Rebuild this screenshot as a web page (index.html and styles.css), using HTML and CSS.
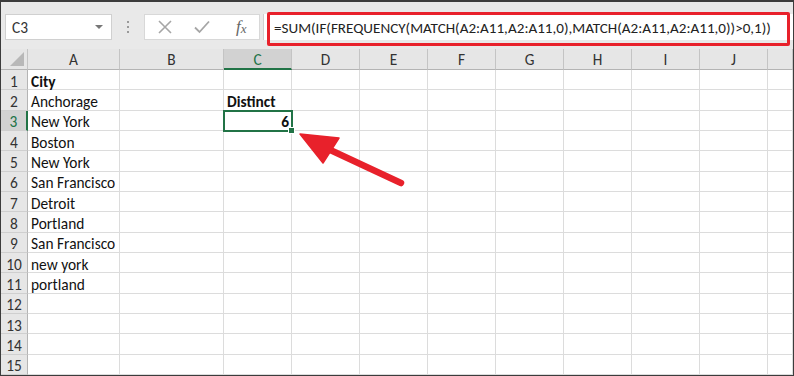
FILE: index.html
```html
<!DOCTYPE html>
<html lang="en">
<head>
  <meta charset="UTF-8">
  <title>Distinct count</title>
  <link rel="stylesheet" href="styles.css">
</head>
<body>
  <div class="app">
    <div class="toolbar">
      <div class="namebox">
        <span>C3</span>
        <span class="caret"></span>
      </div>
      <div class="grip"><i></i><i></i><i></i></div>
      <div class="fbtns">
        <svg width="14" height="14" viewBox="0 0 14 14"><path d="M1 1L13 13M13 1L1 13" stroke="#a6a6a6" stroke-width="1.6" fill="none"/></svg>
        <svg width="16" height="14" viewBox="0 0 16 14"><path d="M1 7.5L5.5 12L15 1.5" stroke="#a6a6a6" stroke-width="1.8" fill="none"/></svg>
        <span class="fx">f<sub>x</sub></span>
      </div>
      <div class="formula">=SUM(IF(FREQUENCY(MATCH(A2:A11,A2:A11,0),MATCH(A2:A11,A2:A11,0))&gt;0,1))</div>
    </div>

    <div class="sheet">
      <div class="hd corner"></div>
      <div class="hd">A</div><div class="hd">B</div><div class="hd on">C</div><div class="hd">D</div><div class="hd">E</div><div class="hd">F</div><div class="hd">G</div><div class="hd">H</div><div class="hd">I</div><div class="hd">J</div><div class="hd"></div>

      <div class="rh">1</div><div class="c b">City</div><div class="c"></div><div class="c"></div><div class="c"></div><div class="c"></div><div class="c"></div><div class="c"></div><div class="c"></div><div class="c"></div><div class="c"></div><div class="c"></div>
      <div class="rh">2</div><div class="c">Anchorage</div><div class="c"></div><div class="c b">Distinct</div><div class="c"></div><div class="c"></div><div class="c"></div><div class="c"></div><div class="c"></div><div class="c"></div><div class="c"></div><div class="c"></div>
      <div class="rh on">3</div><div class="c">New York</div><div class="c"></div><div class="c b num sel">6</div><div class="c"></div><div class="c"></div><div class="c"></div><div class="c"></div><div class="c"></div><div class="c"></div><div class="c"></div><div class="c"></div>
      <div class="rh">4</div><div class="c">Boston</div><div class="c"></div><div class="c"></div><div class="c"></div><div class="c"></div><div class="c"></div><div class="c"></div><div class="c"></div><div class="c"></div><div class="c"></div><div class="c"></div>
      <div class="rh">5</div><div class="c">New York</div><div class="c"></div><div class="c"></div><div class="c"></div><div class="c"></div><div class="c"></div><div class="c"></div><div class="c"></div><div class="c"></div><div class="c"></div><div class="c"></div>
      <div class="rh">6</div><div class="c">San Francisco</div><div class="c"></div><div class="c"></div><div class="c"></div><div class="c"></div><div class="c"></div><div class="c"></div><div class="c"></div><div class="c"></div><div class="c"></div><div class="c"></div>
      <div class="rh">7</div><div class="c">Detroit</div><div class="c"></div><div class="c"></div><div class="c"></div><div class="c"></div><div class="c"></div><div class="c"></div><div class="c"></div><div class="c"></div><div class="c"></div><div class="c"></div>
      <div class="rh">8</div><div class="c">Portland</div><div class="c"></div><div class="c"></div><div class="c"></div><div class="c"></div><div class="c"></div><div class="c"></div><div class="c"></div><div class="c"></div><div class="c"></div><div class="c"></div>
      <div class="rh">9</div><div class="c">San Francisco</div><div class="c"></div><div class="c"></div><div class="c"></div><div class="c"></div><div class="c"></div><div class="c"></div><div class="c"></div><div class="c"></div><div class="c"></div><div class="c"></div>
      <div class="rh">10</div><div class="c">new york</div><div class="c"></div><div class="c"></div><div class="c"></div><div class="c"></div><div class="c"></div><div class="c"></div><div class="c"></div><div class="c"></div><div class="c"></div><div class="c"></div>
      <div class="rh">11</div><div class="c">portland</div><div class="c"></div><div class="c"></div><div class="c"></div><div class="c"></div><div class="c"></div><div class="c"></div><div class="c"></div><div class="c"></div><div class="c"></div><div class="c"></div>
      <div class="rh">12</div><div class="c"></div><div class="c"></div><div class="c"></div><div class="c"></div><div class="c"></div><div class="c"></div><div class="c"></div><div class="c"></div><div class="c"></div><div class="c"></div><div class="c"></div>
      <div class="rh">13</div><div class="c"></div><div class="c"></div><div class="c"></div><div class="c"></div><div class="c"></div><div class="c"></div><div class="c"></div><div class="c"></div><div class="c"></div><div class="c"></div><div class="c"></div>
      <div class="rh">14</div><div class="c"></div><div class="c"></div><div class="c"></div><div class="c"></div><div class="c"></div><div class="c"></div><div class="c"></div><div class="c"></div><div class="c"></div><div class="c"></div><div class="c"></div>
      <div class="rh">15</div><div class="c"></div><div class="c"></div><div class="c"></div><div class="c"></div><div class="c"></div><div class="c"></div><div class="c"></div><div class="c"></div><div class="c"></div><div class="c"></div><div class="c"></div>
    </div>

    <!-- annotations -->
    <div class="callout"></div>
    <svg class="arrow" width="794" height="376" viewBox="0 0 794 376">
      <line x1="401" y1="183" x2="326" y2="148" stroke="#e8212b" stroke-width="6.5" stroke-linecap="round"/>
      <polygon points="300,134 339,138 323,163" fill="#e8212b" stroke="#e8212b" stroke-width="1.5" stroke-linejoin="round"/>
    </svg>
  </div>
</body>
</html>
```

FILE: styles.css
```css
* {
  box-sizing: border-box;
}

body {
  margin: 0;
  background: #ffffff;
  font-family: Carlito, Lato, "Liberation Sans", sans-serif;
}

.app {
  position: relative;
  width: 794px;
  height: 376px;
  border: 1px solid #3c3c3c;
  border-top-width: 2px;
  overflow: hidden;
  background: #ffffff;
}

/* formula bar */
.toolbar {
  display: flex;
  align-items: flex-start;
  height: 47px;
  padding: 12px 0 0 4px;
  background: #e9e9e9;
}

.namebox {
  display: flex;
  align-items: center;
  justify-content: space-between;
  width: 107px;
  height: 26px;
  padding: 0 8px 0 6px;
  background: #fff;
  border: 1px solid #d0d0d0;
  font-size: 15.4px;
  color: #333;
}

.caret {
  width: 0;
  height: 0;
  border-left: 4px solid transparent;
  border-right: 4px solid transparent;
  border-top: 4px solid #777;
}

.grip {
  display: flex;
  flex-direction: column;
  justify-content: center;
  gap: 3px;
  width: 32px;
  height: 26px;
  align-items: center;
}

.grip i {
  width: 2px;
  height: 2px;
  background: #9a9a9a;
}

.fbtns {
  display: flex;
  align-items: center;
  gap: 22px;
  width: 116px;
  height: 26px;
  padding-left: 13px;
  background: #fff;
  border: 1px solid #d8d8d8;
}

.fx {
  font-family: "Liberation Serif", serif;
  font-style: italic;
  font-size: 17px;
  color: #666;
  margin-left: 4px;
}

.fx sub {
  font-size: 13px;
  vertical-align: -1px;
}

.formula {
  flex: 1;
  height: 26px;
  margin-left: 3px;
  padding-left: 10px;
  padding-top: 1px;
  line-height: 26px;
  background: #fff;
  border-left: 1px solid #d0d0d0;
  font-size: 15.1px;
  color: #222;
  white-space: nowrap;
}

/* grid */
.sheet {
  display: grid;
  grid-template-columns: 27px 92px 104px 68px 68px 68px 68px 68px 68px 68px 68px 1fr;
  grid-template-rows: 21px repeat(15, 20.33px);
  font-size: 15.4px;
  line-height: 16px;
  color: #111;
}

.hd {
  display: flex;
  align-items: center;
  justify-content: center;
  padding-top: 2px;
  background: #e6e6e6;
  border-right: 1px solid #c4c4c4;
  border-bottom: 1px solid #b4b4b4;
  color: #333;
}

.hd.on {
  background: #d2d2d2;
  border-bottom: 2px solid #217346;
  color: #217346;
}

.corner {
  position: relative;
}

.corner::after {
  content: "";
  position: absolute;
  right: 3px;
  bottom: 3px;
  border-left: 14px solid transparent;
  border-bottom: 14px solid #b8b8b8;
}

.rh {
  display: flex;
  align-items: center;
  justify-content: center;
  padding-top: 4px;
  background: #e6e6e6;
  border-right: 1px solid #b4b4b4;
  border-bottom: 1px solid #cfcfcf;
  color: #333;
}

.rh.on {
  background: #d2d2d2;
  border-right: 2px solid #217346;
  color: #217346;
}

.c {
  display: flex;
  align-items: center;
  padding-left: 3px;
  padding-top: 4px;
  border-right: 1px solid #dcdcdc;
  border-bottom: 1px solid #dcdcdc;
  white-space: nowrap;
  overflow: visible;
}

.b {
  font-weight: bold;
}

.num {
  justify-content: flex-end;
  padding-right: 2px;
}

.sel {
  position: relative;
  outline: 2px solid #217346;
  outline-offset: -1px;
}

.sel::after {
  content: "";
  position: absolute;
  right: -4px;
  bottom: -4px;
  width: 5px;
  height: 5px;
  background: #217346;
  border: 1px solid #fff;
}

.callout {
  position: absolute;
  left: 266px;
  top: 10px;
  width: 523px;
  height: 34px;
  border: 3px solid #e8212b;
  border-radius: 2px;
}

.arrow {
  position: absolute;
  left: -1px;
  top: -2px;
  pointer-events: none;
}
```
